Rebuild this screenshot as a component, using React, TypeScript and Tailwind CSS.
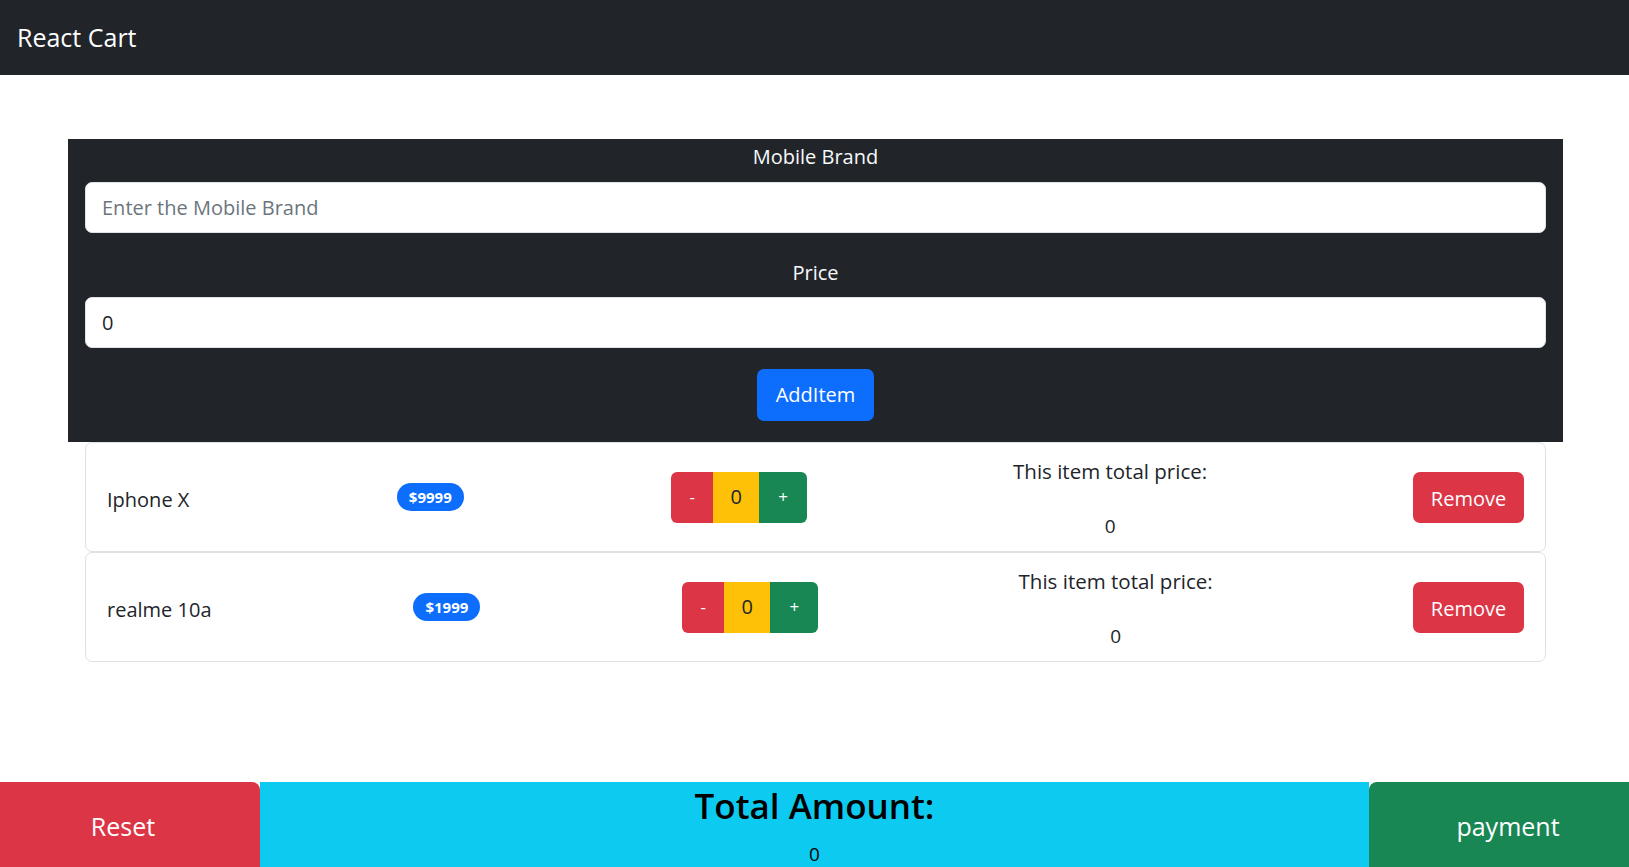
const items = [
  { id: 1, name: "Iphone X", price: 9999, qty: 0 },
  { id: 2, name: "realme 10a", price: 1999, qty: 0 },
];

const ItemRow = ({ item }: { item: (typeof items)[number] }) => {
  return (
    <div className="flex h-[110px] items-center justify-between rounded-[7px] border border-[#dfe1e4] bg-white px-[21px]">
      <p className="pt-[5px] text-[20px] text-[#212529]">{item.name}</p>
      <span className="flex h-[28px] w-[67px] items-center justify-center rounded-full bg-[#0d6efd] text-[15px] font-bold text-white">
        ${item.price}
      </span>
      <div className="flex h-[51px] w-[136px] overflow-hidden rounded-[6px]">
        <button className="w-[42px] bg-[#dc3545] text-[17px] text-white">-</button>
        <span className="flex w-[46px] items-center justify-center bg-[#ffc107] text-[20px] text-[#212529]">
          {item.qty}
        </span>
        <button className="w-[48px] bg-[#198754] text-[17px] text-white">+</button>
      </div>
      <div className="flex w-[191px] flex-col items-center gap-[30px] whitespace-nowrap pt-[4px] text-[20.5px] leading-[25px] text-[#212529]">
        <p>This item total price:</p>
        <p className="text-[19px]">{item.qty * item.price}</p>
      </div>
      <button className="h-[51px] w-[111px] rounded-[7px] bg-[#dc3545] pt-[3px] text-[20px] text-white">
        Remove
      </button>
    </div>
  );
};

const App = () => {
  return (
    <div
      className="flex min-h-screen flex-col bg-white"
      style={{ fontFamily: '"Open Sans", "Noto Sans", sans-serif' }}>
      <nav className="flex h-[75px] items-center bg-[#212529] px-[17px]">
        <h1 className="text-[25px] text-white">React Cart</h1>
      </nav>

      <main className="mt-[64px] flex flex-col">
        <section className="ml-[68px] mr-[66px] flex flex-col bg-[#212529] px-[17px] pb-[21px] pt-[4px] text-[#f8f9fa]">
          <label className="text-center text-[20px] leading-[28px]">Mobile Brand</label>
          <input
            className="mt-[11px] h-[51px] rounded-[7px] border border-[#dee2e6] bg-white px-[16px] text-[20px] text-[#212529] placeholder:text-[#6c757d]"
            placeholder="Enter the Mobile Brand"
          />
          <label className="mt-[26px] text-center text-[20px] leading-[28px]">Price</label>
          <input
            className="mt-[10px] h-[51px] rounded-[7px] border border-[#dee2e6] bg-white px-[16px] text-[20px] text-[#212529]"
            defaultValue="0"
          />
          <button className="mx-auto mt-[21px] h-[52px] w-[117px] rounded-[7px] bg-[#0d6efd] text-[20px] text-white">
            AddItem
          </button>
        </section>

        <div className="ml-[85px] mr-[83px] flex flex-col">
          {items.map((it) => (
            <ItemRow key={it.id} item={it} />
          ))}
        </div>
      </main>

      <footer className="mt-auto flex h-[85px]">
        <button className="w-[260px] rounded-tr-[8px] bg-[#dc3545] pr-[14px] pt-[4px] text-[25px] text-white">
          Reset
        </button>
        <div className="flex flex-1 flex-col items-center bg-[#0dcaf0] pt-[2px] text-black">
          <h2 className="text-[35px] font-semibold leading-[44px]">Total Amount:</h2>
          <p className="mt-[16px] text-[19px] leading-[20px]">0</p>
        </div>
        <button className="w-[260px] rounded-tl-[8px] bg-[#198754] pl-[18px] pt-[4px] text-[25px] text-white">
          payment
        </button>
      </footer>
    </div>
  );
};

export default App;
